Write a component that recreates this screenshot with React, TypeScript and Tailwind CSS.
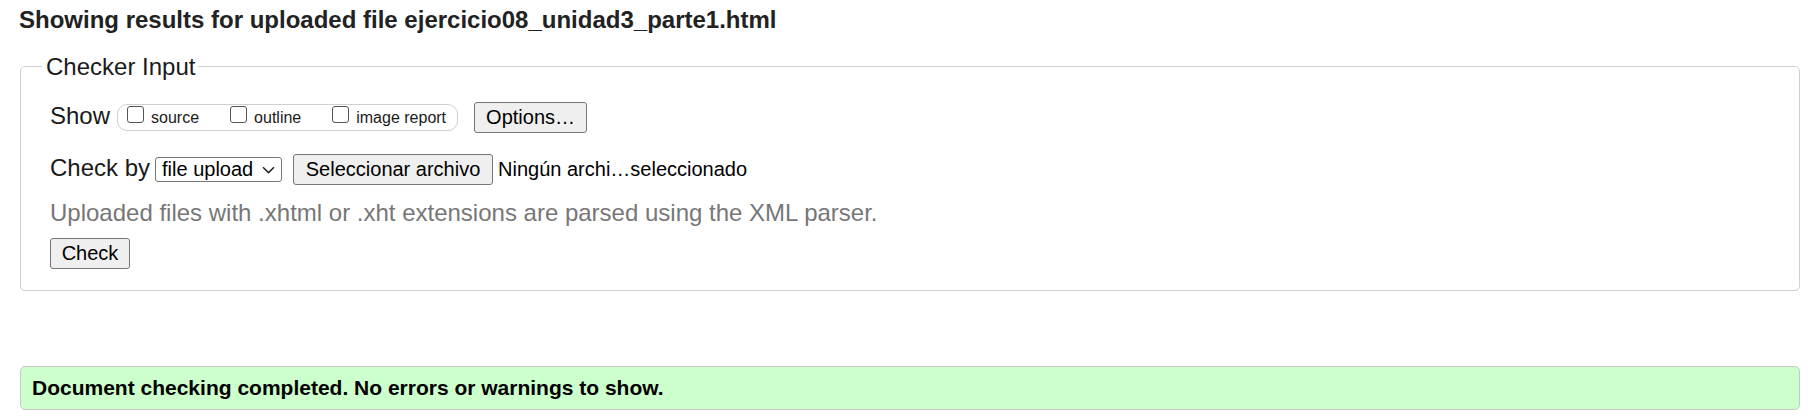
import React from "react";

function Box() {
  return <span className="mt-[1px] block w-[17px] h-[17px] shrink-0 border border-[#555] rounded-[3px] bg-white" />;
}

export default function App() {
  return (
    <div className="w-[1810px] h-[417px] overflow-hidden bg-white text-[#1a1a1a] font-['Liberation_Sans',Arial,sans-serif] pt-[6px]">
      <h2 className="pl-[19px] text-[24px] leading-[27px] font-bold text-[#222]">
        Showing results for uploaded file ejercicio08_unidad3_parte1.html
      </h2>

      <fieldset className="mt-[20px] ml-[20px] w-[1780px] border border-[#cfcfcf] rounded-[5px] pl-[29px] pr-[29px] pt-[22px] pb-[21px]">
        <legend className="-ml-[8px] pl-[4px] pr-[3px] text-[24px] leading-[27px]">Checker Input</legend>

        <div className="flex items-start h-[31px]">
          <span className="text-[24px] leading-[27px]">Show</span>
          <div className="ml-[7px] mt-[2px] h-[27px] flex items-start border border-[#cfcfcf] rounded-[10px] pl-[9px] pr-[11px]">
            <Box />
            <span className="ml-[7px] mt-[4px] text-[16px] leading-[18px]">source</span>
            <span className="ml-[31px]"><Box /></span>
            <span className="ml-[7px] mt-[4px] text-[16px] leading-[18px]">outline</span>
            <span className="ml-[31px]"><Box /></span>
            <span className="ml-[7px] mt-[4px] text-[16px] leading-[18px]">image report</span>
          </div>
          <button
            type="button"
            className="ml-[16px] w-[113px] h-[31px] flex items-center justify-center border border-[#767676] rounded-[3px] bg-[#efefef] text-[20px] leading-[23px] text-black"
          >
            Options…
          </button>
        </div>

        <div className="mt-[21px] flex items-start h-[31px]">
          <span className="text-[24px] leading-[27px]">Check by</span>
          <div className="ml-[5px] mt-[3px] w-[127px] h-[25px] flex items-center justify-between border border-[#767676] rounded-[3px] bg-white pl-[6px] pr-[6px]">
            <span className="text-[20px] leading-[23px] text-black">file upload</span>
            <svg width="13" height="8" viewBox="0 0 13 8" className="shrink-0">
              <path d="M1 1.2 L6.5 6.6 L12 1.2" fill="none" stroke="#222" strokeWidth="1.5" />
            </svg>
          </div>
          <button
            type="button"
            className="ml-[11px] w-[200px] h-[31px] flex items-center justify-center border border-[#767676] rounded-[3px] bg-[#efefef] text-[20px] leading-[23px] text-black"
          >
            Seleccionar archivo
          </button>
          <span className="ml-[5px] mt-[4px] text-[20px] leading-[23px] text-black">Ningún archi…seleccionado</span>
        </div>

        <p className="mt-[14px] text-[24px] leading-[27px] text-[#777]">
          Uploaded files with .xhtml or .xht extensions are parsed using the XML parser.
        </p>

        <div className="mt-[12px] flex">
          <button
            type="button"
            className="w-[80px] h-[31px] flex items-center justify-center border border-[#767676] rounded-[3px] bg-[#efefef] text-[20px] leading-[23px] text-black"
          >
            Check
          </button>
        </div>
      </fieldset>

      <div className="mt-[75px] ml-[20px] w-[1780px] h-[44px] flex items-center border border-[#c8c8c8] rounded-[5px] bg-[#ccffcc] pl-[11px]">
        <span className="text-[21px] leading-[24px] font-bold text-black">
          Document checking completed. No errors or warnings to show.
        </span>
      </div>
    </div>
  );
}
